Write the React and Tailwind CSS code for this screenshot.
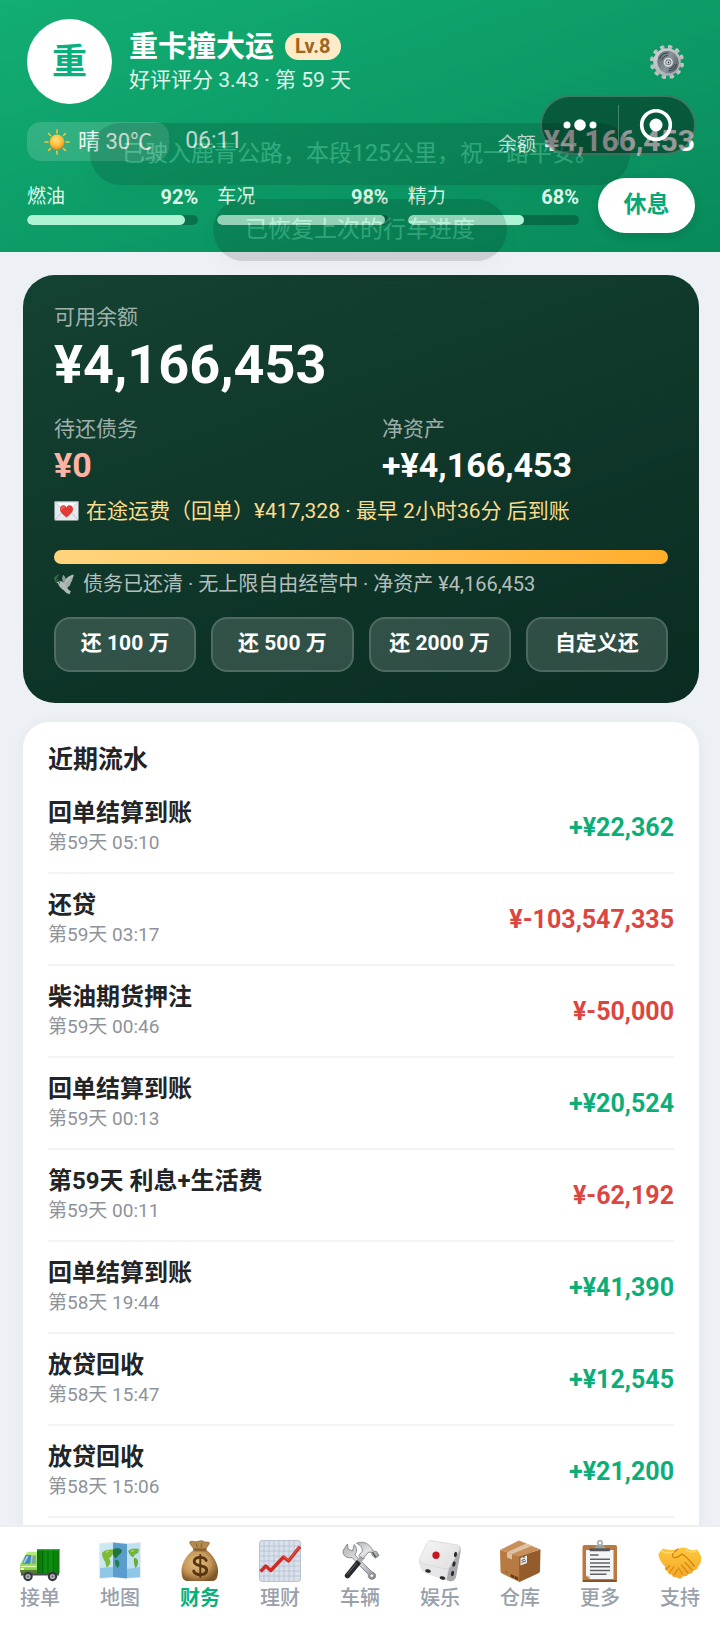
import React from "react";

const svgBox = "block shrink-0";

function SunIcon() {
  return (
    <svg viewBox="0 0 26 26" className={`${svgBox} size-[26px]`} aria-hidden="true">
      <defs>
        <radialGradient id="sun" cx="45%" cy="35%" r="65%">
          <stop offset="0" stopColor="#ffe27a" />
          <stop offset="0.6" stopColor="#fdbf3c" />
          <stop offset="1" stopColor="#f08a1c" />
        </radialGradient>
      </defs>
      <g stroke="#fbc437" strokeWidth="1.6" strokeLinecap="round">
        <path d="M13 1v3M13 22v3M1 13h3M22 13h3M4.5 4.5l2 2M19.5 19.5l2 2M21.5 4.5l-2 2M6.5 19.5l-2 2" />
      </g>
      <circle cx="13" cy="13" r="7.4" fill="url(#sun)" />
    </svg>
  );
}

function GearIcon() {
  const teeth = Array.from({ length: 12 }, (_, i) => i * 30);
  return (
    <svg viewBox="0 0 36 36" className={`${svgBox} size-9`} aria-hidden="true">
      <defs>
        <linearGradient id="gearRim" x1="0" y1="0" x2="1" y2="1">
          <stop offset="0" stopColor="#d3d5d6" />
          <stop offset="1" stopColor="#a4a6a8" />
        </linearGradient>
        <linearGradient id="gearDisc" x1="0" y1="0" x2="1" y2="1">
          <stop offset="0" stopColor="#56616b" />
          <stop offset="0.5" stopColor="#89949d" />
          <stop offset="1" stopColor="#48525c" />
        </linearGradient>
      </defs>
      <g transform="rotate(12 18 18)">
        {teeth.map((a) => (
          <path key={a} d="M16.4 5.500 15.500 1.800Q18 -.2 20.500 1.800L19.600 5.500Z" fill="url(#gearRim)" transform={`rotate(${a} 18 18)`} />
        ))}
        <circle cx="18" cy="18" r="13.800" fill="url(#gearRim)" />
      </g>
      <ellipse cx="19" cy="18" rx="10.600" ry="11.400" fill="url(#gearDisc)" transform="rotate(-20 19 18)" />
      <path d="M10.500 15a9 9 0 0 1 9-6M12.800 16a6.500 6.500 0 0 1 6-4.500M27.500 20a9 9 0 0 1-8 7M25.500 20.500a7 7 0 0 1-5.500 4.500" fill="none" stroke="#37414a" strokeWidth="1" />
      <circle cx="19.300" cy="18.300" r="4.600" fill="#dcdedf" />
      <circle cx="19.300" cy="18.300" r="3" fill="#747e86" />
      <circle cx="19.300" cy="18.300" r="1.900" fill="#f2f2f2" />
      <circle cx="19.500" cy="18.500" r="0.900" fill="#1f2a31" />
    </svg>
  );
}

function LoveLetterIcon() {
  return (
    <svg viewBox="0 0 25 20" className={`${svgBox} h-5 w-[25px]`} aria-hidden="true">
      <rect x="0.5" y="0.5" width="24" height="19" rx="1" fill="#e6e9ee" />
      <path d="M1 19 10 9M24 19 15 9" stroke="#b9bfca" strokeWidth="0.8" />
      <path d="M0.5 1 12.5 12 24.5 1Z" fill="#f7f8fa" stroke="#c2c8d2" strokeWidth="0.8" />
      <path d="M12.5 16.500C8 13 6 10.700 6 8.100c0-3.900 4.800-5.200 6.500-1.700 1.700-3.500 6.500-2.200 6.500 1.700 0 2.600-2 4.900-6.500 8.400Z" fill="#e43a35" />
      <path d="M7.800 8.200c0-1.600 1.100-2.500 2.400-2.200" stroke="#ff8f86" strokeWidth="1" fill="none" strokeLinecap="round" />
    </svg>
  );
}

function DoveIcon() {
  return (
    <svg viewBox="0 0 22 22" className={`${svgBox} size-[22px] opacity-80`} aria-hidden="true">
      <path d="M4.300 8.600C6.500 7.800 8.500 8.200 10 9.500 11.200 5.500 14.500 2.400 19.600 1.400c.1 1.400-.2 2.400-1 3.700 0 1.900-.9 3.100-1.700 4.500-.4 2.700-2 4.300-3.700 5 .7 1.800 2 3 3.800 4-.7.8-1.300 1.500-1.300 2.600-2.200-.1-3.600-1.200-4.700-2.600C9.600 16.800 6.800 15.500 5.400 13.200 4.600 12 4.400 11 4 10.200L2 9.600Z" fill="#d9dddd" />
      <path d="M9.800 9.300C7.600 6.800 7.800 4.300 9.300 1.800c1.700 1.700 2.500 3.300 2.400 5.200Z" fill="#aeb8b6" />
      <path d="M11.500 11c2.500-1.500 5-3.500 7-6M12 13c2-.8 3.600-1.800 4.900-3.300" stroke="#98a3a1" strokeWidth="0.8" fill="none" />
      <circle cx="5.400" cy="9.700" r="0.600" fill="#24332e" />
      <path d="M2.500 9.700C1.300 8.200 1 6.500 1.500 4M1.300 6.200 .4 5M1.700 7.800 3.700 6.400M1.500 5.500 3.200 3.400M2.300 3.500 4.500 2" stroke="#4b7a45" strokeWidth="1.200" fill="none" strokeLinecap="round" />
    </svg>
  );
}

function TruckIcon() {
  return (
    <svg viewBox="0 0 42 42" className={`${svgBox} size-[42px]`} aria-hidden="true">
      <defs>
        <linearGradient id="cargo" x1="0" y1="0" x2="1" y2="0">
          <stop offset="0" stopColor="#077507" />
          <stop offset="0.5" stopColor="#109414" />
          <stop offset="1" stopColor="#077a0a" />
        </linearGradient>
        <linearGradient id="cab" x1="0" y1="0" x2="0" y2="1">
          <stop offset="0" stopColor="#b9ee7e" />
          <stop offset="1" stopColor="#7fce3e" />
        </linearGradient>
      </defs>
      <path d="M2 32h38v3.500H2z" fill="#4a4f52" />
      <rect x="18" y="9" width="22.500" height="24" fill="url(#cargo)" />
      <path d="M23.500 9v24M29 9v24M34.500 9v24" stroke="#056107" strokeWidth="0.900" />
      <path d="M18 9h22.500v1.300H18z" fill="#38ad38" />
      <path d="M7 13.500Q8 11.800 10 11.800h8V33H2.500Q1 33 1 31V25Z" fill="url(#cab)" />
      <path d="M6.600 15h5.800l-1.200 8.800H3.300Z" fill="#3f86c9" />
      <path d="M7.400 16h2.500L6 23H4Z" fill="#9cc9ee" />
      <path d="M13.600 15.500h3.200v8.300h-3.900Z" fill="#7da6a8" />
      <path d="M1.500 26.500h16" stroke="#e4f9b5" strokeWidth="1.200" />
      <path d="M1 30h17v3.500H2Z" fill="#557d35" />
      <rect x="1.500" y="28" width="3.500" height="2" rx="0.800" fill="#fff6be" />
      <g>
        <circle cx="9" cy="36.500" r="4.700" fill="#36393c" />
        <circle cx="33.500" cy="36.500" r="4.700" fill="#36393c" />
        <circle cx="9" cy="36.500" r="2.600" fill="#aeb4b9" />
        <circle cx="33.500" cy="36.500" r="2.600" fill="#aeb4b9" />
        <circle cx="9" cy="36.500" r="1" fill="#5c6165" />
        <circle cx="33.500" cy="36.500" r="1" fill="#5c6165" />
      </g>
    </svg>
  );
}

function MapIcon() {
  return (
    <svg viewBox="0 0 42 42" className={`${svgBox} size-[42px]`} aria-hidden="true">
      <path d="M0 3 14 2 28 3 42 2V38L28 38.500 14 38 0 39Z" fill="#e9ecee" />
      <path d="M1 4 14 3V37L1 38Z" fill="#cbe7f4" />
      <path d="M14 2.500 28 4V38.500L14 37Z" fill="#5a9dcc" />
      <path d="M28 4 41 3V37L28 38Z" fill="#bfe1f2" />
      <path d="M1 28 14 27V37L1 38ZM28 29 41 27V37L28 38Z" fill="#8dc6e6" />
      <path d="M3 13c2-2.500 5-3.500 11-3.500V14c-1 2-2.500 3-4 4.500 1.200 2 2 3 1.200 4.800-.6 1.800-2 3-3.200 4.400-1.500-2-1-4.500-2.200-6.500C4.500 19 3 17 3 13Z" fill="#7dba35" />
      <path d="M14 9.500c3-2 7-1.500 9 .5 0 2.500-1.500 4-3.500 5-.5 2-2 3-3.500 3L14 15Z" fill="#23753f" />
      <path d="M16 20c2-1 4.500.5 4.500 3 0 2-1 4-2 5-1.600-1.700-3-4.500-2.500-8Z" fill="#23804a" />
      <path d="M29 11c3-3 8-3 11-2l-1 4-3 1.500-2 3-3-2.500Z" fill="#6fb440" />
      <path d="M35 18c2-.5 4 1 4 4 0 2.500-1 4.500-2.300 6-1.500-2.500-2.300-6-1.700-10Z" fill="#6bac34" />
      <path d="M7 12.500 9.500 11M32 11.500l3-1" stroke="#d4d76b" strokeWidth="1.200" />
    </svg>
  );
}

function MoneyBagIcon() {
  return (
    <svg viewBox="0 0 42 42" className={`${svgBox} size-[42px]`} aria-hidden="true">
      <defs>
        <radialGradient id="bag" cx="42%" cy="42%" r="62%">
          <stop offset="0" stopColor="#e3bf83" />
          <stop offset="0.600" stopColor="#c5975a" />
          <stop offset="1" stopColor="#80572a" />
        </radialGradient>
      </defs>
      <path d="M11 1.500c3-1 4.500.8 7 .2 3-1 5-1.500 7.500.1 1.500.8 3-.3 4.700.8 1 1-2.500 4.200-3.700 7.400H15C14 6.500 9.600 3.500 11 1.500Z" fill="#b58a50" stroke="#8b6231" strokeWidth="0.700" />
      <path d="M15 10h12c7 4.500 12 13 12 21 0 6.500-2 10-5 10H8c-3.500 0-5.500-3.500-5.500-10C2.500 23 7.500 14.500 15 10Z" fill="url(#bag)" />
      <path d="M14.500 8.300h13v3h-13z" fill="#8d6230" />
      <path d="M17 3.500l1.500 4M23 3l-1 4.500" stroke="#7e572b" strokeWidth="0.900" />
      <g fill="none" stroke="#5a3511" strokeWidth="2.900" strokeLinecap="round">
        <path d="M27.200 20.400c-1-2.200-3.300-3-6-3-3.500 0-6 1.500-6 4.200 0 6 12.500 2.300 12.500 8.400 0 3-2.700 4.600-6.300 4.600-3.300 0-5.700-1-6.700-3.500" />
        <path d="M21.300 15v22" strokeWidth="2" />
      </g>
    </svg>
  );
}

function ChartIcon() {
  return (
    <svg viewBox="0 0 42 42" className={`${svgBox} size-[42px]`} aria-hidden="true">
      <rect x="0" y="0" width="42" height="42" rx="3.500" fill="#dbe1ea" />
      <path d="M5 0v42M10 0v42M15 0v42M20 0v42M25 0v42M30 0v42M35 0v42M0 6h42M0 11h42M0 16h42M0 21h42M0 26h42M0 31h42M0 36h42" stroke="#b3bfd3" strokeWidth="0.800" />
      <rect x="0.500" y="0.500" width="41" height="41" rx="3" fill="none" stroke="#b9c2cf" />
      <path d="M1.500 31.500 6.800 26l5 4.500L24.500 17l5 4L41 6.500" fill="none" stroke="#cf2c24" strokeWidth="3.400" strokeLinejoin="round" />
      <path d="M24.500 16.500l5 4L41 6" fill="none" stroke="#ea6148" strokeWidth="1" />
    </svg>
  );
}

function ToolsIcon() {
  return (
    <svg viewBox="0 0 42 42" className={`${svgBox} size-[42px]`} aria-hidden="true">
      <defs>
        <linearGradient id="steel" x1="0" y1="0" x2="1" y2="1">
          <stop offset="0" stopColor="#b2b4b7" />
          <stop offset="0.500" stopColor="#e4e4e6" />
          <stop offset="1" stopColor="#84878b" />
        </linearGradient>
      </defs>
      <path d="M8.500 4 9 9l4.500 2L15.200 4.500C18.500 8 18 12 15.800 15L33 32c3 .5 4.300 2.800 3.300 5.300-1.500 2.800-5.600 2.700-6.900-.4-.3-.8-.2-1.500 0-2.300L13 17.500C8.500 18.800 3.800 16 4 11.500L5 9Z" fill="url(#steel)" stroke="#65686c" strokeWidth="0.700" />
      <circle cx="32.900" cy="35.700" r="1.800" fill="#fff" stroke="#73767a" strokeWidth="0.700" />
      <path d="M22 14.500 26 18 14.500 31.500 11 28.500Z" fill="#a9acb0" />
      <path d="M18 20 22 23.500 10 38c-1.700 1.500-5.500-1.200-4-3.500Z" fill="#27292c" />
      <path d="M8.500 34 17.500 23.500" stroke="#666a6f" strokeWidth="1" />
      <path d="M17.500 3.200c5.500-2 11-.7 14.500 4.300l2.500 3.700 3 .3 2.500 4-3.500 2.700-3.500-3.200-.3-2.500c-2.500-.8-4.400.3-5.900 2.900l-2.900 3.500-4-3.400 3.300-4.200C23.500 7.500 21.500 5.200 17.500 3.200Z" fill="url(#steel)" stroke="#6a6d71" strokeWidth="0.700" />
      <path d="M33.500 12 36.500 17" stroke="#4b4e52" strokeWidth="1.300" />
    </svg>
  );
}

function DieIcon() {
  return (
    <svg viewBox="0 0 42 42" className={`${svgBox} size-[42px]`} aria-hidden="true">
      <defs>
        <linearGradient id="dieTop" x1="0" y1="0" x2="1" y2="1">
          <stop offset="0" stopColor="#f6f6f6" />
          <stop offset="1" stopColor="#dedee0" />
        </linearGradient>
      </defs>
      <path d="M11 .8Q12.500.2 14 .8L38.500 5Q43 6.500 42 11L37 37Q35.500 41.500 31 41.200L7.500 33.500Q3 32 1.500 27L0 22Z" fill="#d3d4d6" />
      <path d="M30.500 27 41.800 9.500 37 37Q35.500 41.500 31 41.200L27.500 40Z" fill="#a9abae" />
      <path d="M0 22 29 28.500 27.500 40 7.500 33.500Q3 32 1.500 27Z" fill="#e6e6e8" />
      <path d="M11.500.8 38 4.700Q42 6 40 10L31 27Q29.500 29.600 26.500 29L3.500 23.500Q-.5 22 .7 18.500L8 3Q9 .8 11.500.8Z" fill="url(#dieTop)" stroke="#d2d2d4" strokeWidth="0.600" />
      <ellipse cx="17" cy="15.300" rx="3.600" ry="3.700" fill="#c9151f" />
      <ellipse cx="9" cy="31" rx="2.900" ry="1.700" fill="#2b2b2d" transform="rotate(14 9 31)" />
      <ellipse cx="23.500" cy="38" rx="2.900" ry="1.700" fill="#2b2b2d" transform="rotate(14 23.500 38)" />
      <ellipse cx="36.500" cy="14.500" rx="1.500" ry="2.700" fill="#2b2b2d" transform="rotate(15 36.500 14.500)" />
      <ellipse cx="35" cy="24" rx="1.500" ry="2.700" fill="#2b2b2d" transform="rotate(15 35 24)" />
      <ellipse cx="33.500" cy="33.500" rx="1.500" ry="2.700" fill="#2b2b2d" transform="rotate(15 33.500 33.500)" />
    </svg>
  );
}

function BoxIcon() {
  return (
    <svg viewBox="0 0 42 42" className={`${svgBox} size-[42px]`} aria-hidden="true">
      <path d="M1 10 20.500 16V42L3 33.500Q1.500 32.800 1.500 31Z" fill="#b87a43" />
      <path d="M20.500 16 41.500 9.500 41 31Q41 32.500 39.500 33.300L20.500 42Z" fill="#955c2b" />
      <path d="M1 10 20 .5 41.500 9.500 20.500 16.500Z" fill="#c98f5a" />
      <path d="M8 12.300 27.500 3.500 33 5.700 13 14Z" fill="#dcc5a6" />
      <path d="M8 12.300 13 14V19.500L8 17.500Z" fill="#d9c1a1" />
      <path d="M21.500 18 28 15.500V23L21.500 25.500Z" fill="#e7e8e8" />
      <path d="M22.500 20.500l3.500-1.300M22.500 22.500l4.500-1.600M24 17.500l2-.8" stroke="#4a4a4a" strokeWidth="0.900" />
      <path d="M12 34.500l3 1.300V38l-3-1.300ZM16 36.200l2.800 1.200V40L16 38.700ZM6 31.500l3 1.200" fill="#5c3a1b" stroke="#5c3a1b" strokeWidth="0.500" />
      <path d="M20.500 16.500V42" stroke="#83501f" strokeWidth="0.700" />
    </svg>
  );
}

function ClipboardIcon() {
  return (
    <svg viewBox="0 0 42 42" className={`${svgBox} size-[42px]`} aria-hidden="true">
      <rect x="3.500" y="5" width="34.500" height="37" rx="2" fill="#b9793f" />
      <rect x="3.500" y="40" width="34.500" height="2" rx="1" fill="#8a5525" />
      <path d="M7 10H34.500V39H11L7 35.500Z" fill="#f5f6f7" />
      <path d="M7 35.500 11 36v3Z" fill="#c6c9cc" />
      <path d="M11 14.900h8.500M11 19.200h20M11 23h20M11 26.800h20M11 30.600h20M11 34.200h16.500" stroke="#606468" strokeWidth="1.500" />
      <rect x="10.500" y="8.300" width="20.500" height="3" rx="1" fill="#54585c" />
      <path d="M15 8.300Q17 7 17.500 5h7Q25 7 27 8.300Z" fill="#9da2a6" />
      <circle cx="21" cy="3" r="2.200" fill="none" stroke="#9ea4a8" strokeWidth="1.500" />
    </svg>
  );
}

function HandshakeIcon() {
  return (
    <svg viewBox="0 0 44 42" className={`${svgBox} h-[42px] w-11`} aria-hidden="true">
      <defs>
        <linearGradient id="hand" x1="0" y1="0" x2="0" y2="1">
          <stop offset="0" stopColor="#fdc93e" />
          <stop offset="1" stopColor="#f4a623" />
        </linearGradient>
      </defs>
      <path d="M.5 13.500 5 8.500c4.500 1.500 9 1.800 14.500.8 5-3 9.500-1.500 12.500.6 3 .5 5.500.2 7.500-.4l3.800 7.500c.3 4.500-1.300 7.500-3.300 9.800-.5 2.500-3 3.700-4.500 3.700-.8 2.700-3 3.600-5 3.400-1.300 2.400-3.500 3-5.500 2-1 2.800-4 3.700-6.300 1.200-2.700.8-4.700-.6-5-2.500-2.500 0-4-1.400-4-3.400-2.600-.6-3.600-2.600-2.600-4.700C3.500 23 .5 18.500.5 13.500Z" fill="url(#hand)" />
      <path d="M20 9c-3.500 2.500-6.500 5-5.500 7.500 2 3 7-.5 9.500-2.500 4 2.500 8 6.500 12 12" fill="none" stroke="#cf7f12" strokeWidth="1.300" strokeLinecap="round" />
      <path d="M27 22.500l7 7.500M23.500 25l6.500 8M20.500 28l4 6" fill="none" stroke="#d5861a" strokeWidth="1.200" strokeLinecap="round" />
      <path d="M11.500 25.500l-3 3.500M15.500 27l-3.500 5M19.500 29.500l-3 5" fill="none" stroke="#d5861a" strokeWidth="1.200" strokeLinecap="round" />
      <path d="M4 11.500c4 2 8 2 12 .5M28 10.500c3 1.500 6 2 10 .8" fill="none" stroke="#ffe284" strokeWidth="1" strokeLinecap="round" />
    </svg>
  );
}

const stats = [
  { id: "fuel", label: "燃油", value: 92 },
  { id: "condition", label: "车况", value: 98 },
  { id: "energy", label: "精力", value: 68 },
];

const repayOptions = ["还 100 万", "还 500 万", "还 2000 万", "自定义还"];

const records = [
  { title: "回单结算到账", time: "第59天 05:10", amount: "+¥22,362" },
  { title: "还贷", time: "第59天 03:17", amount: "¥-103,547,335", out: true },
  { title: "柴油期货押注", time: "第59天 00:46", amount: "¥-50,000", out: true },
  { title: "回单结算到账", time: "第59天 00:13", amount: "+¥20,524" },
  { title: "第59天 利息+生活费", time: "第59天 00:11", amount: "¥-62,192", out: true },
  { title: "回单结算到账", time: "第58天 19:44", amount: "+¥41,390" },
  { title: "放贷回收", time: "第58天 15:47", amount: "+¥12,545" },
  { title: "放贷回收", time: "第58天 15:06", amount: "+¥21,200" },
];

const tabs = [
  { label: "接单", Icon: TruckIcon },
  { label: "地图", Icon: MapIcon },
  { label: "财务", Icon: MoneyBagIcon, active: true },
  { label: "理财", Icon: ChartIcon },
  { label: "车辆", Icon: ToolsIcon },
  { label: "娱乐", Icon: DieIcon },
  { label: "仓库", Icon: BoxIcon },
  { label: "更多", Icon: ClipboardIcon },
  { label: "支持", Icon: HandshakeIcon },
];

function Stat({ id, label, value }) {
  return (
    <div className="flex-1 pb-1">
      <div className="flex items-center justify-between leading-7 text-[#dcf7ea]">
        <span id={id} className="text-[19px]">{label}</span>
        <span className="text-[20px] font-bold">{value}%</span>
      </div>
      <div
        role="progressbar"
        aria-labelledby={id}
        aria-valuenow={value}
        className="mt-1 h-2.5 overflow-hidden rounded-full bg-black/25"
      >
        <div className="h-full rounded-full bg-[#adf3d4]" style={{ width: `${value}%` }} />
      </div>
    </div>
  );
}

function Header() {
  return (
    <header className="relative shrink-0 bg-linear-160 from-[#12ae74] to-[#088a5a] pt-[19px] pr-[25px] pb-[19px] pl-[27px] text-white">
      <div className="flex items-center">
        <div className="flex size-[85px] shrink-0 items-center justify-center rounded-full bg-white pt-1 text-[35px] font-bold text-[#07b07d]">
          重
        </div>
        <div className="ml-[17px] flex-1">
          <div className="flex items-center gap-[11px]">
            <h1 className="text-[29px] leading-9 font-bold">重卡撞大运</h1>
            <span className="rounded-full bg-[#fdebc8] px-[10px] text-[20px] leading-[27px] font-bold text-[#a0641c]">Lv.8</span>
          </div>
          <p className="text-[21px] leading-[30px] text-[#dff6ec]">好评评分 3.43 · 第 59 天</p>
        </div>
        <button type="button" aria-label="设置" className="mr-[10px]">
          <GearIcon />
        </button>
      </div>

      <div className="mt-[18px] flex items-center">
        <div className="flex h-[39px] items-center gap-2 rounded-[14px] bg-white/15 px-[17px] text-[22px] text-[#eefaf4]">
          <SunIcon />
          <span>晴 30℃</span>
        </div>
        <span className="ml-4 text-[23px] text-[#dff6ec]">06:11</span>
        <div className="ml-auto flex items-baseline gap-2">
          <span className="text-[19px] text-[#dff6ec]">余额</span>
          <span className="text-[30px] leading-9 font-bold">¥4,166,453</span>
        </div>
      </div>

      <div className="mt-[17px] flex items-center gap-[19px]">
        {stats.map((s) => (
          <Stat key={s.id} {...s} />
        ))}
        <button
          type="button"
          className="h-[55px] w-[97px] rounded-full bg-white text-[23px] font-bold text-[#07a877] shadow-[0_4px_10px_rgba(0,0,0,0.12)]"
        >
          休息
        </button>
      </div>

      <div className="pointer-events-none absolute inset-x-0 top-[123px] z-10 flex flex-col items-center gap-[14px] text-[23px] leading-[62px] text-white opacity-15">
        <p className="rounded-full bg-black/90 px-8 shadow-lg">已驶入鹿青公路，本段125公里，祝一路平安。</p>
        <p className="rounded-full bg-black/90 px-8 shadow-lg">已恢复上次的行车进度</p>
      </div>

      <div className="absolute top-[95px] right-6 z-20 flex h-[60px] w-[156px] items-center rounded-full border-2 border-white/20 bg-black/40 text-white">
        <button type="button" aria-label="菜单" className="flex flex-1 justify-center">
          <svg viewBox="0 0 34 12" className="h-3 w-[34px]" fill="currentColor" aria-hidden="true">
            <circle cx="4" cy="6" r="3.500" />
            <circle cx="17" cy="6" r="5.800" />
            <circle cx="30" cy="6" r="3.500" />
          </svg>
        </button>
        <span className="h-10 w-px bg-white/25" />
        <button type="button" aria-label="关闭" className="flex flex-1 justify-center">
          <svg viewBox="0 0 34 34" className="size-[34px]" aria-hidden="true">
            <circle cx="17" cy="17" r="14.300" fill="none" stroke="currentColor" strokeWidth="3.600" />
            <circle cx="17" cy="17" r="6.500" fill="currentColor" />
          </svg>
        </button>
      </div>
    </header>
  );
}

function BalanceCard() {
  return (
    <section className="rounded-[32px] bg-linear-160 from-[#144232] to-[#0a2c22] p-[31px] pt-[26px] text-white">
      <p className="text-[21px] leading-8 text-white/60">可用余额</p>
      <p className="pt-0.5 text-[54px] leading-[60px] font-bold">¥4,166,453</p>
      <div className="mt-[18px] grid grid-cols-2 gap-[42px]">
        <div>
          <p className="text-[21px] leading-8 text-white/60">待还债务</p>
          <p className="text-[34px] leading-10 font-bold text-[#ffb1a3]">¥0</p>
        </div>
        <div>
          <p className="text-[21px] leading-8 text-white/60">净资产</p>
          <p className="text-[34px] leading-10 font-bold">+¥4,166,453</p>
        </div>
      </div>
      <p className="mt-[10px] flex items-center gap-[7px] text-[21px] leading-8 text-[#fcdc8d]">
        <LoveLetterIcon />
        在途运费（回单）¥417,328 · 最早 2小时36分 后到账
      </p>
      <div className="mt-[23px] h-[14px] rounded-full bg-linear-to-r from-[#ffd57c] to-[#ffae2a]" />
      <p className="mt-1 flex items-center gap-[7px] text-[20px] leading-8 text-white/70">
        <DoveIcon />
        债务已还清 · 无上限自由经营中 · 净资产 ¥4,166,453
      </p>
      <div className="mt-[17px] grid grid-cols-4 gap-[15px]">
        {repayOptions.map((label) => (
          <button
            key={label}
            type="button"
            className="h-[55px] rounded-2xl border-2 border-white/15 bg-white/15 pb-0.5 text-[21px] font-bold whitespace-nowrap"
          >
            {label}
          </button>
        ))}
      </div>
    </section>
  );
}

function Records() {
  return (
    <section className="mt-[19px] rounded-[26px] bg-white px-[25px] pt-5 pb-16 text-[#222426] shadow-[0_0_16px_rgba(20,40,80,0.04)]">
      <h2 className="pb-1 text-[25px] leading-9 font-bold">近期流水</h2>
      <ul>
        {records.map((r) => (
          <li key={r.time} className="flex h-[92px] items-center justify-between border-b-2 border-[#f2f3f5]">
            <div>
              <p className="text-[24px] leading-8 font-bold">{r.title}</p>
              <p className="text-[19px] leading-7 text-[#8d939a]">{r.time}</p>
            </div>
            <p className={r.out ? "pt-0.5 text-[25px] font-bold text-[#dd4540]" : "pt-0.5 text-[25px] font-bold text-[#0cae78]"}>
              {r.amount}
            </p>
          </li>
        ))}
      </ul>
    </section>
  );
}

function TabBar() {
  return (
    <nav className="grid h-[100px] shrink-0 grid-cols-9 border-t-2 border-[#eceef1] bg-white pt-[13px]">
      {tabs.map(({ label, Icon, active }) => (
        <button
          key={label}
          type="button"
          aria-current={active ? "page" : undefined}
          className={
            active
              ? "flex flex-col items-center text-[20px] leading-8 font-bold text-[#08b07c]"
              : "flex flex-col items-center text-[20px] leading-8 font-medium text-[#98a1ab]"
          }
        >
          <Icon />
          {label}
        </button>
      ))}
    </nav>
  );
}

export default function App() {
  return (
    <div className="flex h-screen flex-col bg-[#edf1f5] font-['Roboto','Noto_Sans_CJK_SC',sans-serif]">
      <Header />
      <main className="flex-1 overflow-y-auto pt-[23px] pr-[21px] pl-[23px] [scrollbar-width:none]">
        <BalanceCard />
        <Records />
      </main>
      <TabBar />
    </div>
  );
}
